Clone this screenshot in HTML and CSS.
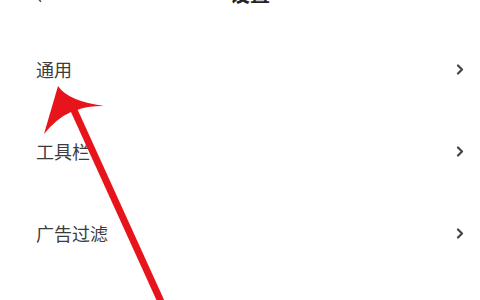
FILE: index.html
```html
<!DOCTYPE html>
<html lang="zh-CN">

<head>
    <meta charset="UTF-8">
    <title>设置</title>
    <link rel="stylesheet" href="styles.css">
</head>

<body>
    <section class="page">
        <div class="header">
            <span class="back">‹</span>
            <h2 class="title">设置</h2>
        </div>
        <ul class="menu">
            <li class="item">
                <span class="label">通用</span>
                <svg class="chevron" width="8" height="11" viewBox="0 0 8 11"><polyline points="2,1.5 6,5.5 2,9.5" /></svg>
            </li>
            <li class="item">
                <span class="label">工具栏</span>
                <svg class="chevron" width="8" height="11" viewBox="0 0 8 11"><polyline points="2,1.5 6,5.5 2,9.5" /></svg>
            </li>
            <li class="item">
                <span class="label">广告过滤</span>
                <svg class="chevron" width="8" height="11" viewBox="0 0 8 11"><polyline points="2,1.5 6,5.5 2,9.5" /></svg>
            </li>
        </ul>
        <!-- 红色标注箭头 -->
        <svg class="mark" width="480" height="300" viewBox="0 0 480 300">
            <line x1="73" y1="108" x2="163" y2="306" />
            <path d="M58 86 Q68 101 104 106 Q86 106 77 110 L71 112 Q57 118 44 134 Q51 110 58 86 Z" />
        </svg>
    </section>
</body>

</html>
```

FILE: styles.css
```css
* {
    margin: 0;
    padding: 0;
}

html,
body {
    width: 480px;
    height: 300px;
    overflow: hidden;
    background: #fff;
    font-family: "Noto Sans CJK SC", "Noto Sans", sans-serif;
}

.page {
    position: relative;
    display: flow-root;
    height: 300px;
}

.header {
    display: flex;
    align-items: center;
    height: 28px;
    margin-top: -20px;
    padding: 0 36px;
}

.header .back {
    width: 20px;
    font-size: 22px;
    color: #333;
    line-height: 28px;
}

.header .title {
    flex: 1;
    text-align: center;
    font-size: 20px;
    font-weight: 700;
    color: #222;
    line-height: 28px;
}

.menu {
    list-style: none;
    padding-top: 20px;
}

.menu .item {
    display: flex;
    align-items: center;
    justify-content: space-between;
    height: 82px;
    padding: 0 14px 0 36px;
}

.menu .label {
    font-size: 18px;
    color: #3c3c3c;
}

.chevron {
    margin-right: 2px;
}

.chevron polyline {
    fill: none;
    stroke: #444;
    stroke-width: 2.2;
    stroke-linecap: round;
    stroke-linejoin: round;
}

.mark {
    position: absolute;
    left: 0;
    top: 0;
}

.mark line {
    stroke: #e8141b;
    stroke-width: 7;
}

.mark path {
    fill: #e8141b;
}
```
